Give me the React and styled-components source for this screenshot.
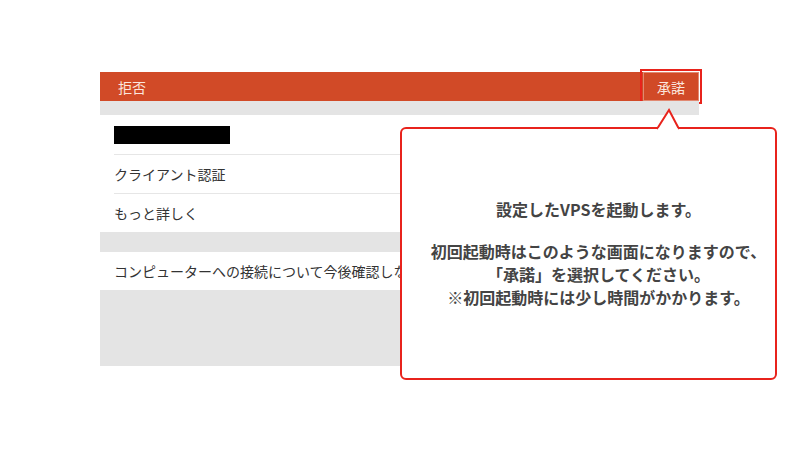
import React from "react";
import styled, { createGlobalStyle } from "styled-components";

const GlobalStyle = createGlobalStyle`
  html, body {
    margin: 0;
    padding: 0;
    background: #ffffff;
  }
  body {
    font-family: "Noto Sans CJK JP", "Noto Sans", sans-serif;
  }
`;

const Page = styled.div`
  width: 800px;
  height: 450px;
  padding: 72px 0 0 100px;
  box-sizing: border-box;
`;

const Panel = styled.div`
  position: relative;
  width: 599px;
  display: flex;
  flex-direction: column;
`;

const Header = styled.div`
  height: 29px;
  background: #d14a27;
  display: flex;
  align-items: center;
  justify-content: space-between;
  padding-left: 18px;
  color: #fbe6de;
  font-size: 14px;
`;

const AcceptButton = styled.div`
  width: 56px;
  height: 100%;
  box-sizing: border-box;
  display: flex;
  align-items: center;
  justify-content: center;
  border: 1px solid rgba(255, 255, 255, 0.35);
  outline: 2px solid #e8231c;
  outline-offset: 1px;
  color: #fbe6de;
  font-size: 14px;
`;

const Spacer = styled.div`
  height: ${({ h }) => h}px;
  background: #e4e4e4;
`;

const List = styled.div`
  background: #ffffff;
  padding-left: 14px;
`;

const Row = styled.div`
  height: ${({ h }) => h || 39}px;
  display: flex;
  align-items: center;
  font-size: 14px;
  color: #333333;
  white-space: nowrap;
  overflow: hidden;
  border-top: ${({ first }) => (first ? "none" : "1px solid #e6e6e6")};
  box-sizing: border-box;
`;

const Redacted = styled.div`
  width: 116px;
  height: 18px;
  background: #000000;
`;

const Callout = styled.div`
  position: absolute;
  left: 300px;
  top: 55px;
  width: 377px;
  height: 253px;
  box-sizing: border-box;
  border: 2px solid #e8231c;
  border-radius: 6px;
  background: #ffffff;
  display: flex;
  flex-direction: column;
  align-items: center;
  justify-content: center;
  padding: 0 0 0 20px;
  text-align: center;
  color: #444444;
  font-size: 16px;
  font-weight: 700;
  line-height: 23px;
  white-space: nowrap;
`;

const Pointer = styled.svg`
  position: absolute;
  left: 255px;
  top: -21px;
  overflow: visible;
`;

const Para = styled.p`
  margin: 0;
  & + & {
    margin-top: 19px;
  }
`;

export default function App() {
  return (
    <>
      <GlobalStyle />
      <Page>
        <Panel>
          <Header>
            <span>拒否</span>
            <AcceptButton>承諾</AcceptButton>
          </Header>
          <Spacer h={14} />
          <List>
            <Row first>
              <Redacted />
            </Row>
            <Row>クライアント認証</Row>
            <Row>もっと詳しく</Row>
          </List>
          <Spacer h={20} />
          <List>
            <Row first h={38}>
              コンピューターへの接続について今後確認しない
            </Row>
          </List>
          <Spacer h={76} />

          <Callout>
            <Pointer width="24" height="22" viewBox="0 0 24 22">
              <path d="M0 21 L12 2 L22 21" fill="#ffffff" stroke="#e8231c" strokeWidth="2" />
              <rect x="1" y="20.5" width="20" height="4" fill="#ffffff" />
            </Pointer>
            <Para>設定したVPSを起動します。</Para>
            <Para>
              初回起動時はこのような画面になりますので、
              <br />
              「承諾」を選択してください。
              <br />
              ※初回起動時には少し時間がかかります。
            </Para>
          </Callout>
        </Panel>
      </Page>
    </>
  );
}
